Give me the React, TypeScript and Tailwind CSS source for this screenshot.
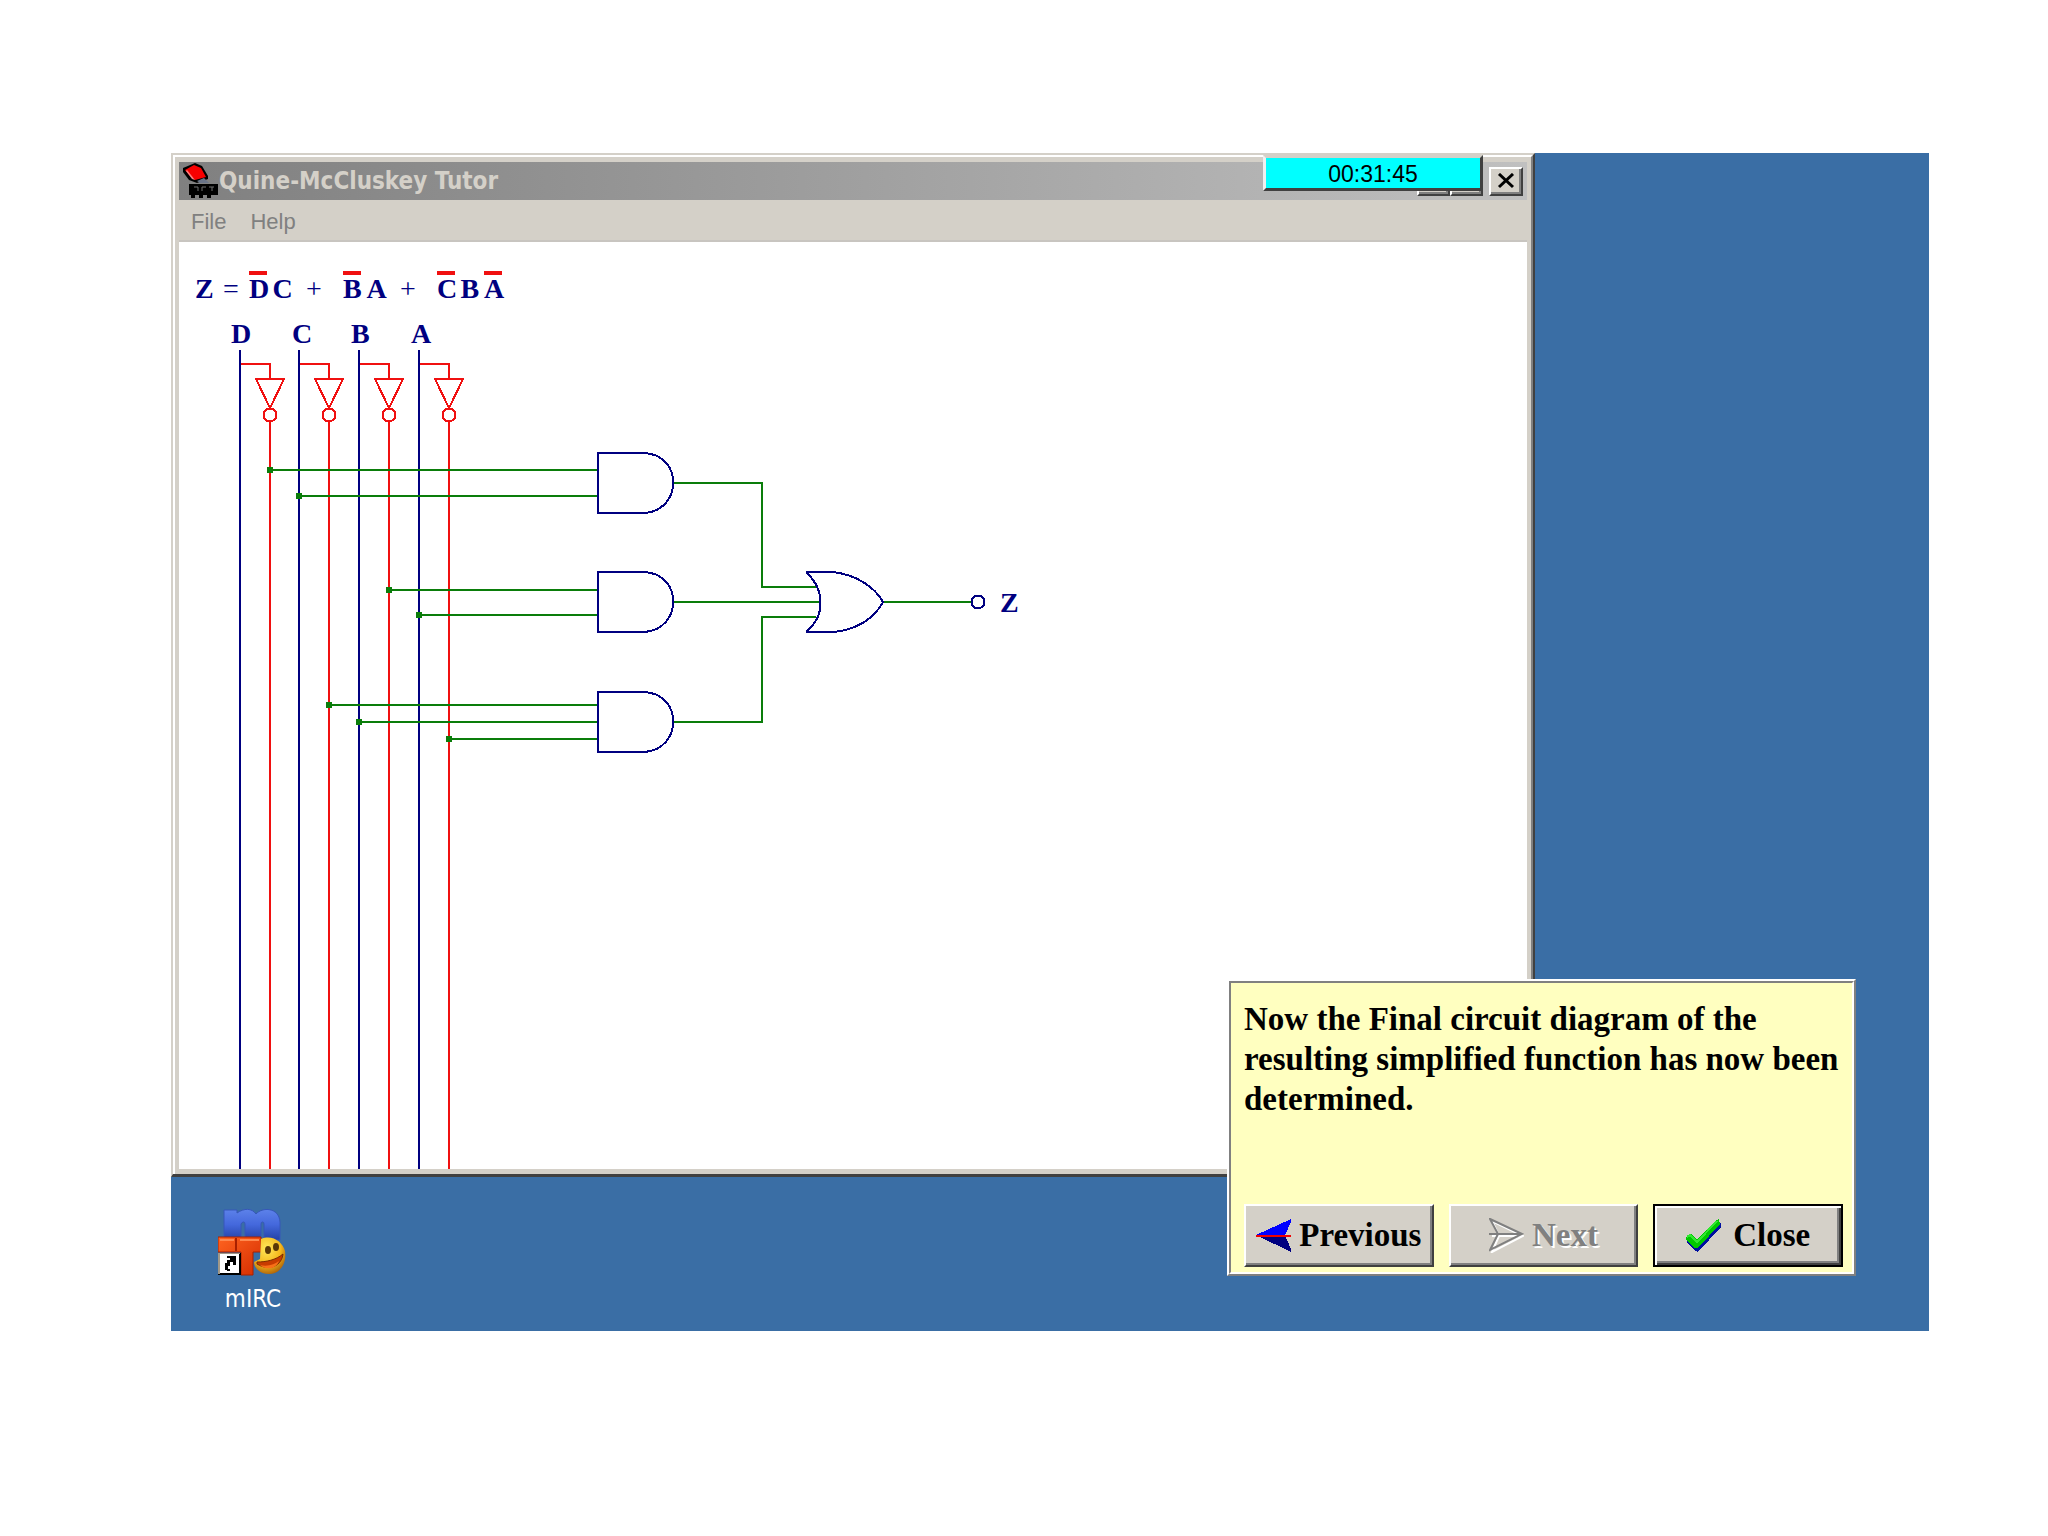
import React from "react";

const NAVY = "#000080";
const RED = "#f01010";
const GREEN = "#0a7d0a";

const inputs = [
  { name: "D", x: 240, label: 231 },
  { name: "C", x: 299, label: 292 },
  { name: "B", x: 359, label: 351 },
  { name: "A", x: 419, label: 411 },
];

const taps = [
  { x: 270, y: 470 },
  { x: 299, y: 496 },
  { x: 389, y: 590 },
  { x: 419, y: 615 },
  { x: 329, y: 705 },
  { x: 359, y: 722 },
  { x: 449, y: 739 },
];

const andGates = [453, 572, 692];

function Inverted({ children }: { children: React.ReactNode }) {
  return (
    <span className="relative">
      <span className="absolute left-0 top-0 h-1 w-[18px] bg-[#f01010]" />
      {children}
    </span>
  );
}

function Formula() {
  return (
    <div className="flex h-[68px] items-start pl-4 pt-[29px] font-['Liberation_Serif',serif] text-[28px] font-bold leading-[36px] text-[#000080]">
      <span className="w-7">Z</span>
      <span className="w-[26px] font-normal">=</span>
      <div className="grid w-[235px] grid-cols-10">
        <Inverted>D</Inverted>
        <span>C</span>
        <span className="col-span-2 pl-2.5 font-normal">+</span>
        <Inverted>B</Inverted>
        <span>A</span>
        <span className="col-span-2 pl-2.5 font-normal">+</span>
        <Inverted>C</Inverted>
        <span>B</span>
      </div>
      <Inverted>A</Inverted>
    </div>
  );
}

function Circuit() {
  return (
    <svg
      width="900"
      height="859"
      viewBox="179 310 900 859"
      className="block max-w-full"
      fill="none"
      strokeWidth="2"
      shapeRendering="crispEdges"
      role="img"
      aria-label="Circuit diagram"
    >
      {inputs.map((i) => (
        <g key={i.name}>
          <path d={`M${i.x} 364H${i.x + 30}V379`} stroke={RED} />
          <path d={`M${i.x + 16} 379H${i.x + 44}L${i.x + 30} 408Z`} stroke={RED} />
          <circle cx={i.x + 30} cy="415" r="6.5" stroke={RED} />
          <path d={`M${i.x + 30} 422V1169`} stroke={RED} />
          <path d={`M${i.x} 350V1169`} stroke={NAVY} />
          <text
            x={i.label}
            y="343"
            fill={NAVY}
            stroke="none"
            className="font-['Liberation_Serif',serif] text-[28px] font-bold"
          >
            {i.name}
          </text>
        </g>
      ))}
      {taps.map((t) => (
        <g key={t.y}>
          <path d={`M${t.x} ${t.y}H598`} stroke={GREEN} />
          <rect x={t.x - 3} y={t.y - 3} width="6" height="6" fill={GREEN} />
        </g>
      ))}
      <path d="M673 483H762V587H816" stroke={GREEN} />
      <path d="M673 602H820" stroke={GREEN} />
      <path d="M673 722H762V617H816" stroke={GREEN} />
      <path d="M883 602H971" stroke={GREEN} />
      {andGates.map((y) => (
        <path
          key={y}
          d={`M598 ${y}H644C684 ${y + 2} 682 ${y + 58} 644 ${y + 60}H598Z`}
          stroke={NAVY}
        />
      ))}
      <path
        d="M807 572H833C856 575 874 586 883 602C874 619 856 630 833 632H807V631C825 616 825 590 807 573Z"
        stroke={NAVY}
      />
      <circle cx="978" cy="602" r="6.5" stroke={NAVY} />
      <text
        x="1000"
        y="612"
        fill={NAVY}
        stroke="none"
        className="font-['Liberation_Serif',serif] text-[28px] font-bold"
      >
        Z
      </text>
    </svg>
  );
}

function AppIcon() {
  return (
    <svg width="36" height="36" viewBox="0 0 36 36" aria-hidden="true">
      <path d="M0 5L12 0L19 3L25 13V16L14 20L6 17L0 9Z" fill="#000" />
      <path d="M2 7L11 2L18 5L23 14L12 17L8 14Z" fill="#f80000" />
      <path d="M3 8L9 16L12 17L4 7Z" fill="#ff8080" />
      <path d="M14 18L21 15L26 20H17Z" fill="#6a7488" />
      <path d="M6 21H35V32H6Z" fill="#000" />
      <path d="M8 32H12V35H8ZM16 32H20V35H16ZM24 32H28V35H24Z" fill="#000" />
      <path d="M11 24H15V28M19 28V24H23M26 24H31M29 28V24" stroke="#707070" fill="none" />
    </svg>
  );
}

function MircIcon() {
  return (
    <svg width="70" height="68" viewBox="0 0 70 68" aria-hidden="true">
      <defs>
        <linearGradient id="mBlue" x1="0" y1="0" x2="0" y2="1">
          <stop offset="0" stopColor="#5d82ea" />
          <stop offset="0.5" stopColor="#4468dc" />
          <stop offset="1" stopColor="#2342a6" />
        </linearGradient>
        <linearGradient id="tRed" x1="0" y1="0" x2="1" y2="1">
          <stop offset="0" stopColor="#ff6420" />
          <stop offset="1" stopColor="#d42c00" />
        </linearGradient>
        <radialGradient id="face" cx="0.4" cy="0.3" r="0.75">
          <stop offset="0" stopColor="#ffe95a" />
          <stop offset="0.6" stopColor="#f5b81c" />
          <stop offset="1" stopColor="#a85c08" />
        </radialGradient>
      </defs>
      <path
        d="M6 2H19V5C26 0 34 0 38 6C44 -1 61 -1 62 14V32H46V16Q46 14 44.500 14T43 16V32H27V16Q27 14 25.500 14T23 16V32H6Z"
        fill="url(#mBlue)"
        stroke="#3656b8"
      />
      <path d="M0 29H43V44H35V67H23V44H0Z" fill="url(#tRed)" stroke="#a82000" />
      <path d="M18 30V43" stroke="#a82000" strokeWidth="2" />
      <path d="M2 32H16M22 32H41" stroke="#ff8a50" strokeWidth="2" />
      <path
        d="M43 31C54 26 65 34 67 43C69 56 62 66 51 66C42 66 36 60 36 54L42 51Z"
        fill="url(#face)"
      />
      <ellipse cx="50" cy="42" rx="3" ry="4" fill="#5a3806" />
      <ellipse cx="58" cy="39" rx="3" ry="4" fill="#5a3806" />
      <path d="M39 54C48 54 58 52 65 46C64 57 52 64 39 56Z" fill="#c83c00" stroke="#7c2c00" />
      <path d="M42 57C50 59 57 56 61 53C58 62 47 62 42 57Z" fill="#f87018" />
      <path d="M0 45H23V67H0Z" fill="#000" />
      <path d="M1 46H21V65H1Z" fill="#fff" />
      <path d="M0 45H22V46H2V66H0Z" fill="#a09888" />
      <path d="M9 48H18V57H15V54H12V58H10V62H7V55H9V52H12V50H9Z" fill="#000" />
      <path d="M9 61H12V63H9Z" fill="#000" />
    </svg>
  );
}

function PreviousIcon() {
  return (
    <svg width="35" height="33" viewBox="0 0 35 33" shapeRendering="crispEdges" aria-hidden="true">
      <path d="M0 16L35 0V3L29 16Z" fill="#0000ff" />
      <path d="M0 16L35 33V30L29 16Z" fill="#000080" />
      <path d="M0 16.500H35" stroke="#f00000" strokeWidth="2" />
    </svg>
  );
}

function NextIcon() {
  return (
    <svg width="35" height="35" viewBox="0 0 35 35" fill="none" strokeWidth="2" aria-hidden="true">
      <path d="M3 3L34 18L3 34L10 18ZM3 18H34" stroke="#fff" />
      <path d="M1 1L33 16L1 32L9 16ZM0 16H33" stroke="#808080" />
    </svg>
  );
}

function CheckIcon() {
  return (
    <svg width="35" height="33" viewBox="0 0 35 33" shapeRendering="crispEdges" aria-hidden="true">
      <path d="M1 18L5 17L12 24L31 4H35V8L12 33L9 32L1 23Z" fill="#0010a0" />
      <path d="M0 18L5 15L11 21L30 1L33 0L34 5L12 29H9L0 21Z" fill="#00c800" />
      <path d="M1 18L4 16L11 23L31 2" stroke="#30e830" strokeWidth="2" fill="none" />
    </svg>
  );
}

const raised =
  "border-2 border-t-white border-l-white border-r-[#404040] border-b-[#404040] bg-[#d4d0c8] shadow-[inset_-2px_-2px_0_#808080]";

const dialogButton =
  "flex h-[63px] flex-1 items-center justify-center whitespace-nowrap font-['Liberation_Serif',serif] text-[33px] font-bold";

export default function App() {
  return (
    <div className="min-h-screen bg-white pb-[205px] pl-[171px] pr-[119px] pt-[153px]">
      <main className="relative bg-[#3a6ea5]">
        <section className="relative mr-[394px] border-2 border-b-[3px] border-b-[#404040] border-l-[#d4d0c8] border-r-[#404040] border-t-[#d4d0c8]">
          <div className="border-2 border-b-0 border-l-white border-r-[#808080] border-t-white">
            <div className="border-4 border-b-[5px] border-t-[5px] border-[#d4d0c8]">
              <header className="flex h-[38px] items-center justify-between bg-linear-to-r from-[#808080] to-[#c0c0c0] pl-1 pr-1">
                <div className="flex items-center">
                  <AppIcon />
                  <h1 className="font-['DejaVu_Sans_Condensed','DejaVu_Sans',sans-serif] text-[24px] font-bold text-[#d4d0c8]">
                    Quine-McCluskey Tutor
                  </h1>
                </div>
                <div className="flex items-center gap-1.5">
                  <div className="flex">
                    <button type="button" aria-label="Minimize" className={`h-[29px] w-[33px] ${raised}`} />
                    <button type="button" aria-label="Maximize" className={`h-[29px] w-[33px] ${raised}`} />
                  </div>
                  <button
                    type="button"
                    aria-label="Close window"
                    className={`flex h-[29px] w-[34px] items-center justify-center ${raised}`}
                  >
                    <svg width="18" height="16" viewBox="0 0 18 16" aria-hidden="true">
                      <path d="M2 1L16 14M16 1L2 14" stroke="#000" strokeWidth="3" />
                    </svg>
                  </button>
                </div>
              </header>
              <nav className="flex h-[42px] items-center gap-6 border-b-2 border-[#c8c5c0] bg-[#d4d0c8] pl-3 pt-0.5 font-['Liberation_Sans',sans-serif] text-[22px] text-[#808080]">
                <button type="button">File</button>
                <button type="button">Help</button>
              </nav>
              <div className="bg-white">
                <Formula />
                <Circuit />
              </div>
            </div>
          </div>
          <div className="absolute right-[50px] top-0 flex h-[36px] w-[220px] items-center justify-center border-[3px] border-b-[#404040] border-l-[#f0f0f0] border-r-[#404040] border-t-[#d4d0c8] bg-[#00ffff] pt-0.5 font-['Liberation_Sans',sans-serif] text-[23px] text-black">
            00:31:45
          </div>
        </section>

        <a
          href="#mirc"
          className="ml-8 flex h-[154px] w-[100px] flex-col items-center gap-2 pt-[31px] font-['DejaVu_Sans_Condensed','DejaVu_Sans',sans-serif] text-[24px] leading-[30px] text-white"
        >
          <MircIcon />
          <span>mIRC</span>
        </a>

        <aside className="absolute bottom-[55px] right-[73px] w-[629px] border-2 border-b-[#808080] border-l-white border-r-[#808080] border-t-white">
          <div className="border-2 border-b-white border-l-[#808080] border-r-white border-t-[#808080] bg-[#ffffc0] pb-[5px] pl-[13px] pr-[9px] pt-4">
            <p className="min-h-[205px] font-['Liberation_Serif',serif] text-[33px] font-bold leading-[40px] text-black">
              Now the Final circuit diagram of the resulting simplified function has now been
              determined.
            </p>
            <div className="flex gap-[15px]">
              <button type="button" className={`${dialogButton} ${raised} gap-2 text-black`}>
                <PreviousIcon />
                Previous
              </button>
              <button
                type="button"
                disabled
                className={`${dialogButton} ${raised} gap-2 text-[#808080] [text-shadow:2px_2px_0_#fff]`}
              >
                <NextIcon />
                Next
              </button>
              <button
                type="button"
                className={`${dialogButton} gap-3 border-2 border-black bg-[#d4d0c8] text-black shadow-[inset_2px_2px_0_#fff,inset_-2px_-2px_0_#404040,inset_-4px_-4px_0_#808080]`}
              >
                <CheckIcon />
                Close
              </button>
            </div>
          </div>
        </aside>
      </main>
    </div>
  );
}
